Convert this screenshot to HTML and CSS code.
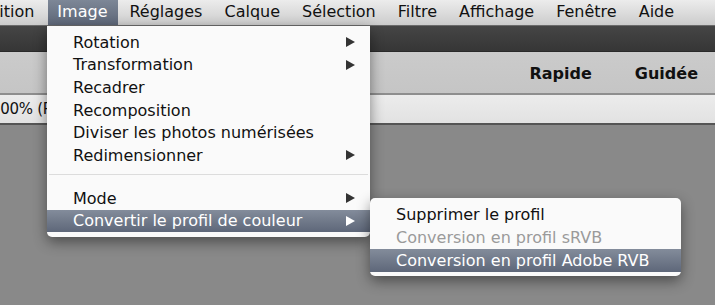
FILE: index.html
```html
<!DOCTYPE html>
<html lang="fr">
<head>
<meta charset="utf-8">
<link rel="stylesheet" href="styles.css">
</head>
<body>
<div class="app">
  <nav class="menubar">
    <span class="mb-item mb-first">Édition</span>
    <span class="mb-item active">Image</span>
    <span class="mb-item">Réglages</span>
    <span class="mb-item">Calque</span>
    <span class="mb-item">Sélection</span>
    <span class="mb-item">Filtre</span>
    <span class="mb-item">Affichage</span>
    <span class="mb-item">Fenêtre</span>
    <span class="mb-item">Aide</span>
  </nav>
  <div class="darkbar"></div>
  <div class="modebar">
    <span class="mode">Rapide</span>
    <span class="mode">Guidée</span>
  </div>
  <div class="optbar"><span class="zoom">100% (RVB/8)</span></div>
  <div class="canvas"></div>

  <ul class="menu main-menu">
    <li class="mi">Rotation<span class="arrow"></span></li>
    <li class="mi">Transformation<span class="arrow"></span></li>
    <li class="mi">Recadrer</li>
    <li class="mi">Recomposition</li>
    <li class="mi">Diviser les photos numérisées</li>
    <li class="mi">Redimensionner<span class="arrow"></span></li>
    <li class="sep"></li>
    <li class="mi">Mode<span class="arrow"></span></li>
    <li class="mi hl">Convertir le profil de couleur<span class="arrow"></span></li>
  </ul>

  <ul class="menu sub-menu">
    <li class="mi">Supprimer le profil</li>
    <li class="mi disabled">Conversion en profil sRVB</li>
    <li class="mi hl">Conversion en profil Adobe RVB</li>
  </ul>
</div>
</body>
</html>
```
FILE: styles.css
```css
* { box-sizing: border-box; }
html, body { margin: 0; padding: 0; }
body {
  width: 715px;
  height: 305px;
  overflow: hidden;
  font-family: "DejaVu Sans", "Liberation Sans", sans-serif;
  background: #898989;
}
.app {
  position: relative;
  width: 715px;
  height: 305px;
  display: flex;
  flex-direction: column;
  overflow: hidden;
}
.menubar {
  height: 26px;
  flex: none;
  display: flex;
  align-items: stretch;
  background: linear-gradient(#ececec, #d9d9d9 60%, #cbcbcb);
  border-bottom: 1px solid #6a6a6a;
  font-size: 16px;
  color: #111;
  white-space: nowrap;
}
.mb-item {
  display: flex;
  align-items: center;
  padding: 0 11px 2px;
}
.mb-first { margin-left: -32px; padding-right: 14px; }
.mb-item.active {
  color: #fff;
  background: linear-gradient(#7d8797, #5d6677);
  padding: 0 11px 2px 9px;
}
.darkbar {
  height: 26px;
  flex: none;
  background: linear-gradient(#454545, #363636);
  border-bottom: 1px solid #2a2a2a;
}
.modebar {
  height: 43px;
  flex: none;
  background: linear-gradient(#cbcbcb, #c5c5c5);
  border-bottom: 2px solid #8e8e8e;
  display: flex;
  align-items: center;
  justify-content: flex-end;
  padding-right: 17px;
  gap: 43px;
}
.mode {
  font-weight: bold;
  font-size: 16px;
  color: #111;
  padding-top: 1px;
}
.optbar {
  height: 30px;
  flex: none;
  background: linear-gradient(#ececec, #e2e2e2);
  border-bottom: 2px solid #555;
  display: flex;
  align-items: center;
  font-size: 15px;
  color: #111;
  white-space: nowrap;
}
.zoom { margin-left: -9px; letter-spacing: -0.3px; }
.canvas {
  flex: 1;
  background: #898989;
}
.menu {
  position: absolute;
  list-style: none;
  margin: 0;
  background: #fafafa;
  font-size: 16px;
  color: #111;
  white-space: nowrap;
  box-shadow: 0 5px 14px rgba(0,0,0,.45);
}
.main-menu {
  left: 47px;
  top: 26px;
  width: 323px;
  padding: 5px 0 5px;
  border-radius: 0 0 5px 5px;
}
.main-menu .mi { height: 22.6px; }
.sub-menu {
  left: 370px;
  top: 198px;
  width: 311px;
  padding: 5px 0 4px;
  border-radius: 5px;
}
.mi {
  height: 23px;
  display: flex;
  align-items: center;
  justify-content: space-between;
  padding: 0 15px 0 26px;
}
.mi.disabled { color: #9a9a9a; }
.mi.hl {
  color: #fff;
  background: linear-gradient(#838c9b, #5e6779);
}
.sep {
  height: 13.4px;
}
.sep::after {
  content: "";
  display: block;
  margin: 7px 2px 0;
  height: 1px;
  background: #dcdcdc;
}
.arrow {
  width: 0;
  height: 0;
  border-left: 9px solid #333;
  border-top: 5px solid transparent;
  border-bottom: 5px solid transparent;
}
.hl .arrow { border-left-color: #fff; }
```
